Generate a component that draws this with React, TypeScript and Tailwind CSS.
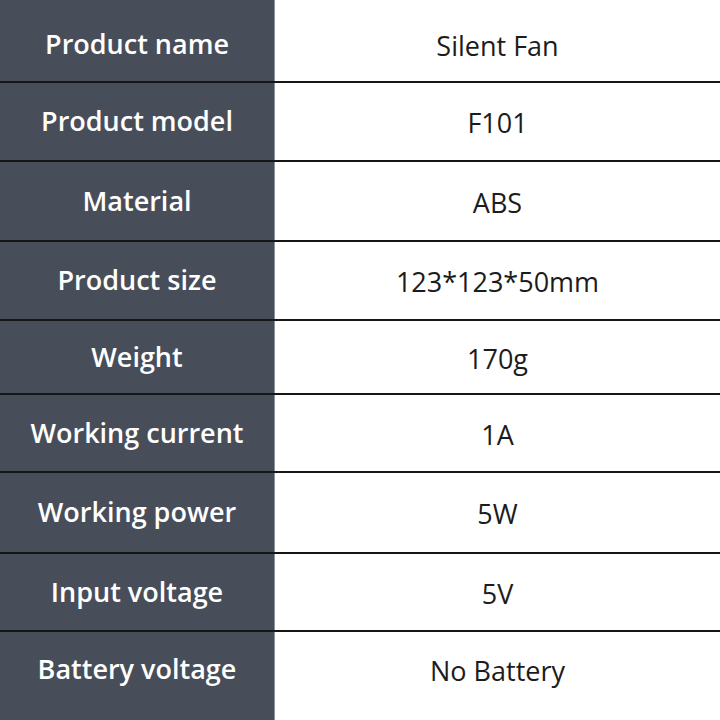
const rows = [
  { label: "Product name", value: "Silent Fan", h: "h-[83px]", pad: "pt-[8px]" },
  { label: "Product model", value: "F101", h: "h-[79px]", pad: "" },
  { label: "Material", value: "ABS", h: "h-[80px]", pad: "" },
  { label: "Product size", value: "123*123*50mm", h: "h-[79px]", pad: "" },
  { label: "Weight", value: "170g", h: "h-[74px]", pad: "" },
  { label: "Working current", value: "1A", h: "h-[78px]", pad: "" },
  { label: "Working power", value: "5W", h: "h-[81px]", pad: "" },
  { label: "Input voltage", value: "5V", h: "h-[78px]", pad: "" },
  { label: "Battery voltage", value: "No Battery", h: "h-[88px]", pad: "pb-[14px]" },
];

export default function App() {
  return (
    <div className="flex h-[720px] w-[720px] flex-col bg-white font-['Open_Sans','Noto_Sans',sans-serif]">
      {rows.map((row, i) => (
        <div
          key={row.label}
          className={`flex ${row.h} ${i < rows.length - 1 ? "border-b-2 border-[#161616]" : ""}`}
        >
          <div
            className={`flex w-[275px] shrink-0 items-center justify-center border-r border-[#8d939b] bg-[#484e59] text-[27px] font-semibold text-white ${row.pad}`}
          >
            {row.label}
          </div>
          <div className={`flex flex-1 items-center justify-center ${row.pad}`}>
            <span className="pt-[4px] text-[27px] text-[#1c1c1c]">{row.value}</span>
          </div>
        </div>
      ))}
    </div>
  );
}
